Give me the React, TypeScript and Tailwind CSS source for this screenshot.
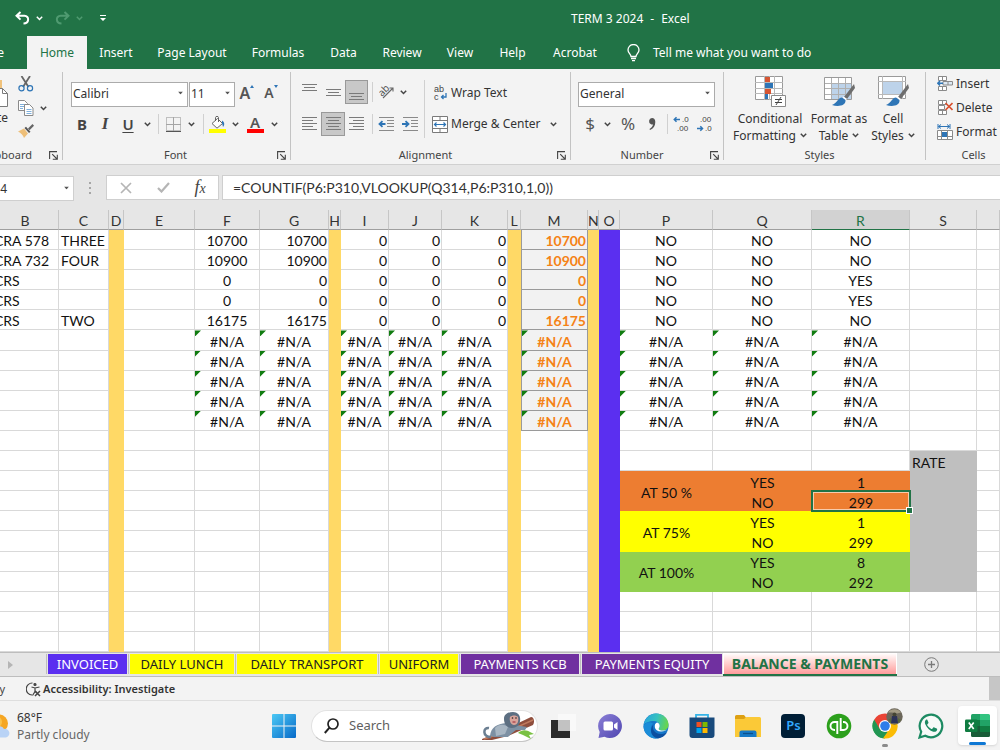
import type { ReactNode } from "react";
import clsx from "clsx";

const UI = "font-['Noto_Sans','Open_Sans',sans-serif]";
const CELL = "font-['Lato','Open_Sans',sans-serif]";

/* ---------- small shared pieces ---------- */

function Chevron({ className = "text-[#444]" }: { className?: string }) {
  return (
    <svg width="7" height="5" viewBox="0 0 7 5" className={clsx("shrink-0", className)} fill="none" stroke="currentColor" strokeWidth="1.5">
      <path d="M0.8 0.8 3.5 3.5 6.2 0.8" />
    </svg>
  );
}

function Caret() {
  return (
    <svg width="5" height="3" viewBox="0 0 5 3" className="pointer-events-none absolute top-1/2 right-[5px] -translate-y-1/2" fill="#555">
      <path d="M0 0h5L2.5 3z" />
    </svg>
  );
}

function Btn({ label, className, children }: { label: string; className?: string; children: ReactNode }) {
  return (
    <button type="button" aria-label={label} className={clsx("flex h-6 shrink-0 items-center justify-center", className)}>
      {children}
    </button>
  );
}

function Sep({ className }: { className?: string }) {
  return <span className={clsx("h-5 w-px shrink-0 bg-[#d0d0d0]", className)} />;
}

function Combo({ label, value, className }: { label: string; value: string; className: string }) {
  return (
    <span className={clsx("relative block h-[25px] shrink-0", className)}>
      <select aria-label={label} className="h-full w-full appearance-none border border-[#ababab] bg-white px-px text-[12px] text-[#333]">
        <option>{value}</option>
      </select>
      <Caret />
    </span>
  );
}

function Launcher() {
  return (
    <button type="button" aria-label="More settings" className="h-[9px] w-[9px]">
      <svg width="9" height="9" viewBox="0 0 9 9" fill="none" stroke="#444" strokeWidth="1.1">
        <path d="M0.6 8V0.6H8M3.2 3.2 8 8M8.3 3.8v4.5H3.8" />
      </svg>
    </button>
  );
}

function Group({ title, className, launcher = true, children }: { title: string; className: string; launcher?: boolean; children: ReactNode }) {
  return (
    <section className={clsx("relative flex shrink-0 flex-col border-r border-[#c3c3c3]", className)}>
      <div className="h-[75px] shrink-0">{children}</div>
      <h2 className="shrink-0 pr-[10px] text-center text-[11px] leading-4 text-[#444]">{title}</h2>
      {launcher && (
        <div className="absolute right-1 bottom-0 flex">
          <Launcher />
        </div>
      )}
    </section>
  );
}

/* ---------- ribbon icons ---------- */

function Lines({ rows }: { rows: [number, number, number][] }) {
  return (
    <svg width="15" height="17" viewBox="0 0 15 17" stroke="#7a7a7a" strokeWidth="1">
      {rows.map(([x, w, y]) => (
        <path key={y} d={`M${x} ${y}.5h${w}`} />
      ))}
    </svg>
  );
}

function Indent({ out }: { out: boolean }) {
  return (
    <svg width="17" height="16" viewBox="0 0 17 16" fill="none" stroke="#8a8a8a">
      <path d="M1 1.5h15M9 4.5h7M9 7.5h7M9 10.5h7M1 14.5h15" />
      {out ? (
        <path d="M7.500 8H2M4.500 5.200 1.500 8l3 2.800" stroke="#2e75b6" strokeWidth="1.8" />
      ) : (
        <path d="M0 8h6M3.500 5.200 6.500 8l-3 2.800" stroke="#2e75b6" strokeWidth="1.8" />
      )}
    </svg>
  );
}

function Brush() {
  return (
    <g>
      <path d="M31 8 21 21l3 2 8-11z" fill="#6d6d6d" />
      <path d="M20.500 20.500 24 23l-1.500 1.500-3-2.500z" fill="#fff" />
      <path d="M19 21.500c-4 0-4 5-10 7.500 6 2 14 1 13.500-5z" fill="#2e75b6" />
    </g>
  );
}

function ConditionalIcon() {
  return (
    <svg width="31" height="32" viewBox="0 0 31 32">
      <path d="M.5 .5h27v23H.5z" fill="#fff" stroke="#9a9a9a" />
      <path d="M9.500 0v24M14.500 0v24M19.500 0v24M0 6.500h28M0 12.500h28M0 17.500h28" stroke="#b8b8b8" />
      <path d="M10 1h5v5h-5zM10 13h6v5h-6z" fill="#d65532" />
      <path d="M10 7h8v5h-8zM10 18h3v5h-3z" fill="#2e75b6" />
      <path d="M16.500 19.500h14v11h-14z" fill="#fff" stroke="#8a8a8a" />
      <path d="M20 23.500h7M20 26.500h7M26 21l-5 8" stroke="#444" />
    </svg>
  );
}

function FormatTableIcon() {
  return (
    <svg width="33" height="32" viewBox="0 0 33 32">
      <path d="M1.500 1.500h27v22h-27z" fill="#fff" stroke="#9a9a9a" />
      <path d="M8 7h20v16H8z" fill="#bdd3ea" />
      <path d="M8.500 2v21M15.500 2v21M22.500 2v21M2 7.500h26M2 12.500h26M2 18.500h26" stroke="#b0b0b0" />
      <Brush />
    </svg>
  );
}

function CellStylesIcon() {
  return (
    <svg width="33" height="32" viewBox="0 0 33 32">
      <path d="M1.500 .5h27v22h-27z" fill="#fff" stroke="#9a9a9a" />
      <path d="M5.500 0v23M25.500 0v23M1 5.500h28M1 18.500h28" stroke="#b8b8b8" />
      <path d="M6 6h19v12H6z" fill="#bdd3ea" />
      <Brush />
    </svg>
  );
}

function BigButton({ icon, lines, className }: { icon: ReactNode; lines: [string, string]; className: string }) {
  return (
    <button type="button" className={clsx("flex shrink-0 flex-col items-center", className)}>
      {icon}
      <span className="mt-[2px] text-[12px] leading-[17px] whitespace-nowrap text-[#333]">
        {lines[0]}
        <br />
        <span className="inline-flex items-center gap-1">
          {lines[1]}
          <Chevron />
        </span>
      </span>
    </button>
  );
}

function CellsIcon({ kind }: { kind: "insert" | "delete" | "format" }) {
  return (
    <svg width="16" height="16" viewBox="0 0 16 16" fill="none" stroke="#8a8a8a" className="shrink-0">
      {kind === "format" ? (
        <>
          <path d="M1 0v5M13 0v5M1.500 2.500h11M4 .5l-2.500 2L4 4.500M10 .5l2.500 2-2.500 2" stroke="#2e75b6" />
          <path d="M.5 6.500h15v9H.5zM4.500 6v10M10.500 6v10M0 12.500h16" fill="#fff" />
          <path d="M5 8h5v5H5z" fill="#2e75b6" stroke="none" />
        </>
      ) : (
        <>
          <path d="M1.500 .5h8v4h-8zM5.500 .5v4M1.500 10.500h8v4h-8zM5.500 10.500v4" fill="#fff" />
          {kind === "insert" ? (
            <>
              <path d="M6 5.500h9.500v3.500H6zM11 5.500V9" fill="#dce8f4" />
              <path d="M6 7.200H1M3 5 .8 7.200 3 9.400" stroke="#2e75b6" strokeWidth="1.500" />
            </>
          ) : (
            <>
              <path d="M1.500 5.500h6v4h-6z" fill="#fff" />
              <path d="M8.500 3l7 7M15.500 3l-7 7" stroke="#d8502f" strokeWidth="1.700" />
            </>
          )}
        </>
      )}
    </svg>
  );
}

/* ---------- header ---------- */

const TABS: [string, string][] = [
  ["Home", "w-[60px]"],
  ["Insert", "w-[58px]"],
  ["Page Layout", "w-[94px]"],
  ["Formulas", "w-[78px]"],
  ["Data", "w-[53px]"],
  ["Review", "w-[64px]"],
  ["View", "w-[52px]"],
  ["Help", "w-[53px]"],
  ["Acrobat", "w-[72px]"],
];

function Header() {
  return (
    <header className="shrink-0 bg-[#217346] text-[12px] text-white">
      <div className="flex h-9 items-center pl-[15px]">
        <button type="button" aria-label="Undo">
          <svg width="15" height="14" viewBox="0 0 15 14" fill="none" stroke="#fff" strokeWidth="2">
            <path d="M5.500 1 1.500 4.800l4 3.800M2 4.800h7.500c5 0 5 7.500-1 7.700" />
          </svg>
        </button>
        <Chevron className="ml-[6px] text-white" />
        <button type="button" aria-label="Redo" className="ml-3">
          <svg width="15" height="14" viewBox="0 0 15 14" fill="none" stroke="#4f9a70" strokeWidth="2">
            <path d="M9.500 1l4 3.800-4 3.800M13 4.800H5.500c-5 0-5 7.500 1 7.700" />
          </svg>
        </button>
        <Chevron className="ml-[6px] text-[#4f9a70]" />
        <button type="button" aria-label="Customize toolbar" className="ml-[17px]">
          <svg width="6" height="6" viewBox="0 0 6 6" fill="#fff">
            <path d="M0 0h6v1H0zM0 3h6L3 6z" />
          </svg>
        </button>
        <h1 className="ml-[465px] flex gap-[7px] pt-px whitespace-nowrap">
          <span>TERM 3 2024</span>
          <span>-</span>
          <span>Excel</span>
        </h1>
      </div>
      <nav className="flex h-[33px] items-stretch whitespace-nowrap">
        <button type="button" className="flex w-[27px] items-center justify-end pr-[23px]">
          File
        </button>
        {TABS.map(([name, w]) => (
          <button key={name} type="button" className={clsx("shrink-0", w, name === "Home" && "bg-[#f3f3f3] text-[#217346]")}>
            {name}
          </button>
        ))}
        <button type="button" className="ml-4 flex items-center gap-[13px]">
          <svg width="13" height="18" viewBox="0 0 13 18" fill="none" stroke="#fff" strokeWidth="1.300">
            <path d="M4 12.500c0-2.500-3-3.500-3-6.500a5.500 5.500 0 0 1 11 0c0 3-3 4-3 6.500zM4 14.500h5M5 16.700h3" />
          </svg>
          Tell me what you want to do
        </button>
      </nav>
    </header>
  );
}

/* ---------- ribbon ---------- */

function Ribbon() {
  return (
    <div className="flex h-24 shrink-0 overflow-hidden border-b border-[#d0d0d0] bg-[#f3f3f3] pt-[3px] pb-1 text-[#333]">
      <Group title="Clipboard" className="-ml-[38px] w-[101px]">
        <div className="flex pt-1">
          <button type="button" className="ml-[10px] flex w-9 flex-col items-end text-[12px] leading-4">
            <svg width="30" height="34" viewBox="0 0 30 34">
              <path d="M1 4h23v22H1z" fill="#f0c27b" />
              <path d="M14.500 12.500h10l5 5v13h-15z" fill="#fff" stroke="#7a7a7a" />
              <path d="M24.500 12.500v5h5" fill="none" stroke="#7a7a7a" />
            </svg>
            Paste
          </button>
          <div className="ml-[10px] flex flex-col gap-2">
            <button type="button" aria-label="Cut">
              <svg width="16" height="16" viewBox="0 0 16 16" fill="none">
                <path d="M3.500 0 10.500 11M12 0 5 11" stroke="#666" strokeWidth="1.800" />
                <circle cx="3.500" cy="12.300" r="2.600" stroke="#2e75b6" strokeWidth="1.200" />
                <circle cx="12" cy="12.300" r="2.600" stroke="#2e75b6" strokeWidth="1.200" />
              </svg>
            </button>
            <span className="flex items-center gap-[6px]">
              <button type="button" aria-label="Copy">
                <svg width="16" height="16" viewBox="0 0 16 16" fill="#fff" stroke="#8a8a8a">
                  <path d="M.5 .5h6l3 3v7h-9z" />
                  <path d="M2 4.500h5M2 6.500h5M2 8.500h3" stroke="#7fb0dc" />
                  <path d="M6.500 4.500h5l3.500 3.500v7.500H6.500z" />
                  <path d="M8.500 9.500h5M8.500 11.500h5M8.500 13.500h5" stroke="#7fb0dc" />
                </svg>
              </button>
              <Chevron />
            </span>
            <button type="button" aria-label="Format painter">
              <svg width="16" height="14" viewBox="0 0 16 14">
                <path d="M0 7.500 6 4.500l4 5-4 4.500C5 11 3 9 0 7.500z" fill="#eebf79" />
                <path d="M6.500 4 8 2.800l4.500 5L11 9z" fill="#555" />
                <path d="M10 4.500 14.500 0 16 1.700l-4.500 4.500z" fill="#666" />
              </svg>
            </button>
          </div>
        </div>
      </Group>

      <Group title="Font" className="w-[228px] pl-2">
        <div className="flex items-center gap-px pt-2">
          <Combo label="Font name" value="Calibri" className="w-[117px]" />
          <Combo label="Font size" value="11" className="w-[46px]" />
          <Btn label="Grow font" className="w-[22px] items-start text-[16px] leading-6 font-semibold text-[#555]">
            A
            <svg width="4" height="3" viewBox="0 0 4 3" fill="#2e75b6" className="mt-1">
              <path d="M0 3h4L2 0z" />
            </svg>
          </Btn>
          <Btn label="Shrink font" className="w-6 items-start text-[14px] leading-6 font-semibold text-[#555]">
            A
            <svg width="4" height="3" viewBox="0 0 4 3" fill="#2e75b6" className="mt-1">
              <path d="M0 0h4L2 3z" />
            </svg>
          </Btn>
        </div>
        <div className="flex items-center pt-[7px] text-[15px] text-[#444]">
          <Btn label="Bold" className="w-[22px] font-bold">B</Btn>
          <Btn label="Italic" className="w-6 font-['Liberation_Serif',serif] text-[17px] font-bold italic">I</Btn>
          <Btn label="Underline" className="w-[22px] font-semibold underline underline-offset-2">U</Btn>
          <Btn label="Underline options" className="w-4"><Chevron /></Btn>
          <Sep className="mx-[3px]" />
          <Btn label="Borders" className="w-[22px]">
            <svg width="15" height="15" viewBox="0 0 15 15" fill="none" stroke="#8a8a8a">
              <path d="M.5 .5h14v13H.5z" strokeDasharray="1 1" />
              <path d="M7.500 0v14M0 7.500h15" stroke="#a5a5a5" />
              <path d="M0 14.500h15" stroke="#555" />
            </svg>
          </Btn>
          <Btn label="Border options" className="w-[14px]"><Chevron /></Btn>
          <Sep className="mr-[2px] ml-[5px]" />
          <Btn label="Fill color" className="w-[22px]">
            <svg width="17" height="17" viewBox="0 0 17 17" fill="none">
              <path d="M3 7.500 8.500 2.500l5 5-5.500 4.700z" fill="#fff" stroke="#666" />
              <path d="M6.500 5V1.500c0-1.500 3-1.500 3 0V6" stroke="#666" />
              <path d="M13 4.500c3 1.500 2.500 5 1 6.500l-1-4z" fill="#2e75b6" />
              <path d="M0 13h17v4H0z" fill="#ff0" />
            </svg>
          </Btn>
          <Btn label="Fill options" className="w-[14px]"><Chevron /></Btn>
          <Btn label="Font color" className="w-[26px] flex-col">
            <span className="text-[15px] leading-[13px] font-semibold text-[#555]">A</span>
            <span className="h-1 w-[17px] bg-[#f00]" />
          </Btn>
          <Btn label="Font color options" className="w-3"><Chevron /></Btn>
        </div>
      </Group>

      <Group title="Alignment" className="w-[280px]">
        <div className="flex">
          <div className="flex w-[133px] shrink-0 flex-col gap-2 pt-2 pl-[6px]">
            <div className="flex items-center">
              <Btn label="Top align" className="w-6"><Lines rows={[[0, 15, 0], [2, 11, 3], [0, 15, 6]]} /></Btn>
              <Btn label="Middle align" className="w-6"><Lines rows={[[0, 15, 5], [2, 11, 8], [0, 15, 11]]} /></Btn>
              <Btn label="Bottom align" className="w-[23px] border border-[#999] bg-[#c8c8c8]"><Lines rows={[[0, 15, 9], [2, 11, 12], [0, 15, 15]]} /></Btn>
              <Sep className="mr-[3px] ml-1" />
              <Btn label="Orientation" className="w-[22px]">
                <svg width="16" height="16" viewBox="0 0 16 16" fill="none" stroke="#666" strokeWidth="1.100">
                  <path d="M4 14 14 4M10.500 4H14v3.500" />
                  <text x="0" y="10" transform="rotate(-45 5 8)" fontSize="10" fill="#555" stroke="none" fontFamily="Noto Sans">ab</text>
                </svg>
              </Btn>
              <Btn label="Orientation options" className="w-[10px]"><Chevron /></Btn>
            </div>
            <div className="flex items-center">
              <Btn label="Align left" className="w-6"><Lines rows={[[0, 15, 1], [0, 11, 4], [0, 15, 7], [0, 11, 10], [0, 15, 13]]} /></Btn>
              <Btn label="Center" className="w-6 border border-[#999] bg-[#c8c8c8]"><Lines rows={[[0, 15, 1], [2, 11, 4], [0, 15, 7], [2, 11, 10], [0, 15, 13]]} /></Btn>
              <Btn label="Align right" className="w-[23px]"><Lines rows={[[0, 15, 1], [4, 11, 4], [0, 15, 7], [4, 11, 10], [0, 15, 13]]} /></Btn>
              <Sep className="mr-px ml-1" />
              <Btn label="Decrease indent" className="w-6"><Indent out /></Btn>
              <Btn label="Increase indent" className="w-6"><Indent out={false} /></Btn>
            </div>
          </div>
          <span className="mt-2 h-[58px] w-px bg-[#d0d0d0]" />
          <div className="flex flex-col gap-[7px] pt-[9px] pl-[7px] text-[12px]">
            <button type="button" className="flex h-6 items-center gap-[3px]">
              <svg width="16" height="18" viewBox="0 0 16 18" fill="#444" fontFamily="Liberation Sans" fontSize="9">
                <text x="2" y="8">ab</text>
                <text x="2" y="16">c</text>
                <path d="M14 9v4H9.500M11.500 11l-2 2 2 2" fill="none" stroke="#2e75b6" strokeWidth="1.300" />
              </svg>
              Wrap Text
            </button>
            <button type="button" className="flex h-6 items-center gap-[3px] whitespace-nowrap">
              <svg width="16" height="17" viewBox="0 0 16 17" fill="#fff" stroke="#7a7a7a">
                <path d="M.5 .5h15v16H.5zM.5 4.500h15M.5 12.500h15M8 .5v4M8 12.500v4" />
                <path d="M2 8.500h12M4.500 6.500 2.500 8.500l2 2M11.500 6.500l2 2-2 2" fill="none" stroke="#2e75b6" strokeWidth="1.200" />
              </svg>
              Merge &amp; Center
              <span className="ml-[6px] flex"><Chevron /></span>
            </button>
          </div>
        </div>
      </Group>

      <Group title="Number" className="w-[153px]">
        <div className="flex pt-2 pl-[7px]">
          <Combo label="Number format" value="General" className="w-[137px]" />
        </div>
        <div className="flex items-center pt-[7px] pl-[7px] text-[#555]">
          <Btn label="Currency" className="w-6 text-[17px]">$</Btn>
          <Btn label="Currency options" className="w-[11px]"><Chevron /></Btn>
          <Btn label="Percent" className="w-[30px] text-[17px]">%</Btn>
          <Btn label="Comma style" className="w-[18px]">
            <svg width="8" height="12" viewBox="0 0 8 12" fill="#555">
              <path d="M4 0a3.300 3.300 0 0 0-1 6.300c1 .3 1.700.2 2 0C4.800 8.500 3.500 10 1.500 11l.5 1c3.500-1.300 5.300-4 5.300-8C7.300 1.500 6 0 4 0z" />
            </svg>
          </Btn>
          <Sep className="mr-[2px] ml-[6px]" />
          <Btn label="Increase decimal" className="w-[22px]">
            <svg width="17" height="18" viewBox="0 0 17 18" fill="#444" fontFamily="Liberation Sans" fontSize="8">
              <path d="M7 4.500H1.500M3.500 2.300 1.300 4.500l2.200 2.200" fill="none" stroke="#2e75b6" strokeWidth="1.500" />
              <text x="9" y="7">.0</text>
              <text x="4" y="16">.00</text>
            </svg>
          </Btn>
          <Btn label="Decrease decimal" className="w-6">
            <svg width="17" height="18" viewBox="0 0 17 18" fill="#444" fontFamily="Liberation Sans" fontSize="8">
              <text x="4" y="7">.00</text>
              <text x="9" y="16">.0</text>
              <path d="M1 13.500h5.500M4.300 11.300l2.200 2.200-2.200 2.200" fill="none" stroke="#2e75b6" strokeWidth="1.500" />
            </svg>
          </Btn>
        </div>
      </Group>

      <Group title="Styles" className="w-[202px]" launcher={false}>
        <div className="flex pt-1 pl-[7px]">
          <BigButton icon={<ConditionalIcon />} lines={["Conditional", "Formatting"]} className="w-[78px]" />
          <BigButton icon={<FormatTableIcon />} lines={["Format as", "Table"]} className="w-[60px]" />
          <BigButton icon={<CellStylesIcon />} lines={["Cell", "Styles"]} className="w-12" />
        </div>
      </Group>

      <Group title="Cells" className="w-[106px]" launcher={false}>
        <div className="flex flex-col gap-2 pt-1 pl-[11px] text-[12px]">
          <button type="button" className="flex h-4 items-center gap-[3px]">
            <CellsIcon kind="insert" />
            Insert
            <span className="ml-2 flex"><Chevron /></span>
          </button>
          <button type="button" className="flex h-4 items-center gap-[3px]">
            <CellsIcon kind="delete" />
            Delete
          </button>
          <button type="button" className="flex h-4 items-center gap-[3px]">
            <CellsIcon kind="format" />
            Format
          </button>
        </div>
      </Group>
    </div>
  );
}

/* ---------- formula bar ---------- */

function FormulaBar() {
  return (
    <div className="flex h-[45px] shrink-0 bg-[#e6e6e6] pt-[10px] pb-[10px]">
      <span className="relative -ml-[23px] w-[97px] shrink-0">
        <input aria-label="Name box" defaultValue="R314" className="h-full w-full border border-[#cfcfcf] bg-white pl-px text-[12px] text-[#333]" />
        <Caret />
      </span>
      <span className="flex w-8 shrink-0 items-center justify-center">
        <svg width="3" height="12" viewBox="0 0 3 12" fill="#a6a6a6">
          <path d="M0 0h2v2H0zM0 5h2v2H0zM0 10h2v2H0z" />
        </svg>
      </span>
      <div className="flex w-[113px] shrink-0 items-center border border-[#cfcfcf] bg-white">
        <Btn label="Cancel" className="w-[37px]">
          <svg width="12" height="12" viewBox="0 0 12 12" stroke="#b5b5b5" strokeWidth="1.700">
            <path d="M1 1l10 10M11 1 1 11" />
          </svg>
        </Btn>
        <Btn label="Enter" className="w-[38px]">
          <svg width="13" height="11" viewBox="0 0 13 11" fill="none" stroke="#b5b5b5" strokeWidth="2.200">
            <path d="M1 6l3.500 3.500L12 1" />
          </svg>
        </Btn>
        <Btn label="Insert function" className="flex-1 font-['Liberation_Serif',serif] text-[18px] text-[#444] italic">
          <span>f<span className="text-[14px]">x</span></span>
        </Btn>
      </div>
      <input
        aria-label="Formula"
        defaultValue="=COUNTIF(P6:P310,VLOOKUP(Q314,P6:P310,1,0))"
        className={clsx(CELL, "ml-[3px] min-w-0 flex-1 border border-r-0 border-[#cfcfcf] bg-white pl-[10px] text-[14px] text-[#333]")}
      />
    </div>
  );
}

/* ---------- sheet ---------- */

const COLS: [string, string][] = [
  ["B", "w-[67px]"],
  ["C", "w-[50px]"],
  ["D", "w-[15px]"],
  ["E", "w-[71px]"],
  ["F", "w-[65px]"],
  ["G", "w-[69px]"],
  ["H", "w-[12px]"],
  ["I", "w-[48px]"],
  ["J", "w-[53px]"],
  ["K", "w-[66px]"],
  ["L", "w-[13px]"],
  ["M", "w-[67px]"],
  ["N", "w-[11px]"],
  ["O", "w-[21px]"],
  ["P", "w-[93px]"],
  ["Q", "w-[99px]"],
  ["R", "w-[98px]"],
  ["S", "w-[67px]"],
  ["", ""],
];

type Row = Record<string, string>;

const balance = (B: string, C: string, amount: string, R: string): Row => ({
  B, C, F: amount, G: amount, I: "0", J: "0", K: "0", M: amount, P: "NO", Q: "NO", R,
});

const missing: Row = Object.fromEntries([..."FGIJKMPQR"].map((c) => [c, "#N/A"]));

const ROWS: Row[] = [
  balance("CRA 578", "THREE", "10700", "NO"),
  balance("CRA 732", "FOUR", "10900", "NO"),
  balance("CRS", "", "0", "YES"),
  balance("CRS", "", "0", "YES"),
  balance("CRS", "TWO", "16175", "NO"),
  missing,
  missing,
  missing,
  missing,
  missing,
  {},
  { S: "RATE" },
  { P: "AT 50 %", Q: "YES", R: "1" },
  { Q: "NO", R: "299" },
  { P: "AT 75%", Q: "YES", R: "1" },
  { Q: "NO", R: "299" },
  { P: "AT 100%", Q: "YES", R: "8" },
  { Q: "NO", R: "292" },
  {},
  {},
  {},
];

const BAND = ["bg-[#ed7d31]", "bg-[#ffff00]", "bg-[#92d050]"];

function Cell({ col, row, text }: { col: string; row: number; text: string }) {
  const inSummary = row >= 12 && row <= 17;
  const band = inSummary && col !== "" && "PQR".includes(col);
  if (band && col === "P" && row % 2 === 1) return null;
  const error = text === "#N/A";
  const selected = col === "R" && row === 13;
  const gold = col !== "" && "DHLN".includes(col);
  const purple = col === "O";
  const rate = col === "S" && row >= 11 && row <= 17;
  const accent = col === "M" && row < 10;
  const plain = !gold && !purple && !rate && !band && !accent;
  const right = !error && col !== "" && "GIJKM".includes(col);
  return (
    <td
      rowSpan={band && col === "P" ? 2 : 1}
      className={clsx(
        "relative h-5 pt-[2px] pb-0 leading-[17px] whitespace-nowrap",
        right ? "pr-px pl-0 text-right" : col !== "" && "BCS".includes(col) ? "pr-0 pl-[2px] text-left" : "px-0 text-center",
        gold && "bg-[#ffd966]",
        purple && "bg-[#5b2ff0]",
        rate && "bg-[#bfbfbf]",
        band && BAND[Math.floor((row - 12) / 2)],
        accent && "border-r border-b border-l border-[#9a9a9a] bg-[#f2f2f2] font-bold text-[#f58216]",
        plain && "border-r border-b border-[#d9d9d9]",
        selected && "z-10",
      )}
    >
      {error && <span className="absolute top-0 left-0 h-[6px] w-[6px] bg-[#107c10] [clip-path:polygon(0_0,100%_0,0_100%)]" />}
      {text}
      {selected && (
        <span className="absolute -inset-px border-2 border-[#217346]">
          <span className="block h-full w-full border border-white/60" />
          <span className="absolute -right-[3px] -bottom-[3px] h-[5px] w-[5px] bg-[#217346] outline-1 outline-white" />
        </span>
      )}
    </td>
  );
}

function Sheet() {
  return (
    <main className="min-h-0 flex-1 overflow-hidden bg-white">
      <div className="-ml-2 h-full">
        <table className={clsx(CELL, "h-full w-full table-fixed border-separate border-spacing-0 text-[14px] text-[#111]")}>
          <colgroup>
            {COLS.map(([c, w]) => (
              <col key={c} className={w} />
            ))}
          </colgroup>
          <thead>
            <tr>
              {COLS.map(([c]) => (
                <th
                  key={c}
                  scope="col"
                  className={clsx(
                    "h-5 border-r border-b border-r-[#c6c6c6] px-0 pt-[2px] pb-0 text-center leading-[17px] font-normal",
                    c === "R" ? "border-b-[#217346] bg-[#d2d2d2] text-[#217346]" : "border-b-[#9f9f9f] bg-[#e6e6e6] text-[#333]",
                  )}
                >
                  {c}
                </th>
              ))}
            </tr>
          </thead>
          <tbody>
            {ROWS.map((r, i) => (
              <tr key={i}>
                {COLS.map(([c]) => (
                  <Cell key={c} col={c} row={i} text={r[c] ?? ""} />
                ))}
              </tr>
            ))}
          </tbody>
        </table>
      </div>
    </main>
  );
}

/* ---------- sheet tabs & status ---------- */

const SHEETS: [string, string][] = [
  ["INVOICED", "w-[79px] bg-[#5b2ff0] text-white"],
  ["DAILY LUNCH", "w-[104px] bg-[#ffff00] text-[#222]"],
  ["DAILY TRANSPORT", "w-[140px] bg-[#ffff00] text-[#222]"],
  ["UNIFORM", "w-[78px] bg-[#ffff00] text-[#222]"],
  ["PAYMENTS KCB", "w-[118px] bg-[#7030a0] text-white"],
  ["PAYMENTS EQUITY", "w-[140px] bg-[#7030a0] text-white"],
];

function SheetTabs() {
  return (
    <nav className="flex h-[25px] shrink-0 items-stretch border-t border-b border-[#bdbdbd] bg-[#e6e6e6] text-[13px] whitespace-nowrap">
      <button type="button" aria-label="Next sheets" className="flex w-[46px] shrink-0 items-center pl-2">
        <svg width="5" height="8" viewBox="0 0 5 8" fill="#b5b5b5">
          <path d="M0 0l5 4-5 4z" />
        </svg>
      </button>
      <div className="flex gap-px pt-px pb-[2px]">
        {SHEETS.map(([name, c]) => (
          <span key={name} className="flex border-l border-[#bdbdbd] pl-px">
            <button type="button" className={clsx("shrink-0 leading-5", c)}>
              {name}
            </button>
          </span>
        ))}
      </div>
      <div className="ml-px flex border-b-2 border-[#217346] bg-white px-px">
        <button type="button" className="w-[172px] bg-linear-to-b from-white to-[#ff9c9c] text-[14px] leading-5 font-bold text-[#217346]">
          BALANCE &amp; PAYMENTS
        </button>
      </div>
      <button type="button" aria-label="New sheet" className="ml-[27px] flex items-center">
        <svg width="15" height="15" viewBox="0 0 15 15" fill="none" stroke="#7a7a7a">
          <circle cx="7.500" cy="7.500" r="6.800" />
          <path d="M7.500 4v7M4 7.500h7" strokeWidth="1.300" />
        </svg>
      </button>
    </nav>
  );
}

function StatusBar() {
  return (
    <div className="flex h-[23px] shrink-0 items-center bg-[#f3f3f3] text-[11px] whitespace-nowrap text-[#444]">
      <span className="flex w-[5px] shrink-0 justify-end pt-px">Ready</span>
      <button type="button" className="ml-[21px] flex items-center gap-[2px] pt-px font-semibold text-[#333]">
        <svg width="15" height="15" viewBox="0 0 15 15" fill="none" stroke="#444" strokeWidth="1.200">
          <path d="M6.500 1A6 6 0 1 0 6 13" />
          <circle cx="9" cy="2.500" r="1" fill="#444" />
          <path d="M5.500 5l3.500 1 4.500-1M9 6v3.500l-2.500 4M9 9l2 2" />
          <path d="M9 9l5 5M14 9l-5 5" strokeWidth="1.500" />
        </svg>
        Accessibility: Investigate
      </button>
      <span className="ml-auto h-full w-[11px] bg-[#c6c6c6]" />
    </div>
  );
}

/* ---------- taskbar ---------- */

function Monkey() {
  return (
    <svg width="53" height="30" viewBox="0 0 53 30" className="shrink-0">
      <path d="M0 28 20 20 49 6c3 0 4 5 2 8L26 25 10 29H0z" fill="#8f4e3d" />
      <path d="M2 28 24 21 51 9" stroke="#c07a5e" strokeWidth="1.500" fill="none" />
      <path d="M36 22c4-4 9-3 12-1l4 2-5 1 2 4-8-4z" fill="#7ac143" />
      <path d="M9 26C0 26 1 16 7 17" fill="none" stroke="#6b7f92" strokeWidth="2.500" />
      <path d="M8 25c1-9 7-12 16-13l9 2 12 2-2 3-9 0-5 4-3 3H12z" fill="#7d90a3" />
      <path d="M13 17c4-4 9-4 13-1l-3 7-9 2z" fill="#a8b6c3" />
      <path d="M22 8c0-5 4-7 9-7s8 4 7 9c0 4-4 7-8 7-5 0-8-4-8-9z" fill="#5d6f82" />
      <path d="M28 6c2-2 6-2 8 0 1 5-1 8-4 8s-5-4-4-8z" fill="#d9a39a" />
      <circle cx="30.500" cy="7" r=".8" fill="#222" />
      <circle cx="34" cy="7" r=".8" fill="#222" />
      <path d="M30.500 11h3" stroke="#923" />
    </svg>
  );
}

const APPS: { name: string; art: ReactNode }[] = [
  {
    name: "Task view",
    art: (
      <svg width="26" height="26" viewBox="0 0 26 26">
        <path d="M0 7h19v18H0z" fill="#2b2b2b" />
        <path d="M7 1h18v17H7z" fill="#f9f9f9" />
        <path d="M7 7h12v11H7z" fill="#c2c2c2" />
      </svg>
    ),
  },
  {
    name: "Chat",
    art: (
      <svg width="26" height="26" viewBox="0 0 26 26">
        <defs>
          <linearGradient id="chat" x1="0" y1="0" x2="1" y2="1">
            <stop offset="0" stopColor="#8b7fd6" />
            <stop offset="1" stopColor="#4f46b0" />
          </linearGradient>
        </defs>
        <path d="M13 1a12 12 0 1 1-5.500 22.700L1.500 25l1.200-6A12 12 0 0 1 13 1z" fill="url(#chat)" />
        <rect x="6.500" y="8.500" width="9.500" height="9" rx="1.500" fill="#fff" />
        <path d="M17 11.500l3.500-2.500v8L17 14.500z" fill="#fff" />
      </svg>
    ),
  },
  {
    name: "Edge",
    art: (
      <svg width="26" height="26" viewBox="0 0 26 26">
        <defs>
          <linearGradient id="edgeTop" x1="0" y1="0.3" x2="1" y2="0.5">
            <stop offset="0" stopColor="#2aa5dd" />
            <stop offset="0.5" stopColor="#35c1c0" />
            <stop offset="1" stopColor="#6ad64a" />
          </linearGradient>
        </defs>
        <circle cx="13" cy="13" r="12.500" fill="#1677c9" />
        <path d="M.8 11.500C2 4.500 7.300.5 13 .5 20.500.5 25.500 6 25.500 11.500c0 4-3 6-6 6-3.500 0-4.300-1.300-3.500-2.500 1.800-2.500 0-7-5-7C6 8 2 10 .8 11.500z" fill="url(#edgeTop)" />
        <path d="M10 10.500c-4.500 4.500-2 13.500 5.500 14.500C8 27 .5 21 .5 13c2-4 6-5 9.500-2.500z" fill="#1b8cd8" />
        <path d="M10.500 11.500c-2 4 1 9.500 7 9.500 3 0 5-.8 6.500-1.800-2 3.800-5.500 6-9.500 6C7 24 6.500 15 10.500 11.500z" fill="#0c4fa0" />
        <path d="M16 15c1.500-2 .5-5-2-5.500-3.500 1-3.500 9 4 9 3 0 5.500-1 7.200-3.300C24.500 17 22 17.500 19.500 17.500c-3.500 0-4.300-1.300-3.500-2.500z" fill="#fff" />
      </svg>
    ),
  },
  {
    name: "Store",
    art: (
      <svg width="26" height="26" viewBox="0 0 26 26">
        <path d="M7 5V1.800h12V5" fill="none" stroke="#35b4e8" strokeWidth="1.800" />
        <path d="M.5 4.500h25V22a3 3 0 0 1-3 3h-19a3 3 0 0 1-3-3z" fill="#184a7c" />
        <path d="M7.500 9h5v5h-5z" fill="#f25022" />
        <path d="M13.500 9h5v5h-5z" fill="#7fba00" />
        <path d="M7.500 15h5v5h-5z" fill="#00a4ef" />
        <path d="M13.500 15h5v5h-5z" fill="#ffb900" />
      </svg>
    ),
  },
  {
    name: "File Explorer",
    art: (
      <svg width="26" height="26" viewBox="0 0 26 26">
        <path d="M0 3.500A1.500 1.500 0 0 1 1.500 2H9l2 2.500-2 3H0z" fill="#dda013" />
        <path d="M0 6h9l2.500-2h13A1.500 1.500 0 0 1 26 5.500V24H0z" fill="#fbc937" />
        <path d="M4.500 24v-4.500a2 2 0 0 1 2-2h13a2 2 0 0 1 2 2V24z" fill="#1679c6" />
        <path d="M8 20.500h10" stroke="#0b4f8c" strokeWidth="1.300" />
      </svg>
    ),
  },
  {
    name: "Photoshop",
    art: (
      <span className="flex h-6 w-6 items-center justify-center rounded-[4px] bg-[#001e36] text-[13px] font-semibold text-[#31a8ff]">Ps</span>
    ),
  },
  {
    name: "QuickBooks",
    art: (
      <svg width="26" height="26" viewBox="0 0 26 26">
        <circle cx="13" cy="13" r="12.300" fill="#2ca01c" />
        <path d="M11.500 9H8.500a4 4 0 0 0 0 8H9M11.300 8v13M14.500 17h3a4 4 0 0 0 0-8H17M14.700 18V5" fill="none" stroke="#fff" strokeWidth="1.900" />
      </svg>
    ),
  },
  {
    name: "Chrome",
    art: (
      <span className="relative">
        <svg width="26" height="26" viewBox="0 0 26 26">
          <path d="M13 13 2.170 6.750A12.500 12.500 0 0 1 23.830 6.750z" fill="#ea4335" />
          <path d="M13 13V25.500A12.500 12.500 0 0 1 2.170 6.750z" fill="#34a853" />
          <path d="M13 13 23.830 6.750A12.500 12.500 0 0 1 11 25.400z" fill="#fbbc05" />
          <path d="M2.170 6.750 8 16.500l5-9.500h11z" fill="#ea4335" />
          <path d="M2.170 6.750 7.500 16l8 3-4.500 6.300A12.500 12.500 0 0 1 2.170 6.750z" fill="#219653" />
          <circle cx="13" cy="13" r="6" fill="#fff" />
          <circle cx="13" cy="13" r="4.800" fill="#2f7de9" />
        </svg>
        <svg width="17" height="17" viewBox="0 0 17 17" className="absolute -top-[5px] left-[14px]">
          <circle cx="8.500" cy="8.500" r="8.200" fill="#6b665a" />
          <path d="M2 4.500a8 8 0 0 1 13 0l-4 1-5-1z" fill="#a39b84" />
          <path d="M6 8h5l1 7H5z" fill="#2c3358" />
          <circle cx="8.500" cy="6.500" r="2" fill="#443" />
          <path d="M2 12l3-2v5zM15 12l-3-2v5z" fill="#586b3d" />
        </svg>
        <span className="absolute -bottom-2 left-[10px] h-[3px] w-[6px] rounded-full bg-[#8a8a8a]" />
      </span>
    ),
  },
  {
    name: "WhatsApp",
    art: (
      <svg width="26" height="26" viewBox="0 0 26 26" fill="none">
        <path d="M1.500 24.500 3.200 18.700A11.300 11.300 0 1 1 7.300 22.800z" fill="#f7faf8" stroke="#1c8a62" strokeWidth="2.200" />
        <path d="M9.300 6.800c-.5-.4-1-.3-1.500.2-1 1-1.200 2.500-.5 4.200 1.500 3.700 4.500 6.500 8 7.500 1.700.4 3.300-.4 3.800-1.800.2-.7.1-1-.4-1.300l-2.400-1.200c-.4-.2-.8-.1-1 .2l-1 1.200c-.3.300-.6.300-1 .1a9 9 0 0 1-4-3.700c-.2-.4-.1-.7.1-.9l.9-1.100c.2-.3.200-.6.100-.9z" fill="#1c8a62" />
      </svg>
    ),
  },
  {
    name: "Excel",
    art: (
      <span className="relative flex h-[39px] w-[39px] items-center justify-center rounded-[4px] bg-white shadow-sm">
        <svg width="25" height="24" viewBox="0 0 25 24">
          <path d="M6 1.500A1.500 1.500 0 0 1 7.500 0H15v6H6z" fill="#21a366" />
          <path d="M15 0h8.500A1.500 1.500 0 0 1 25 1.500V6H15z" fill="#33c481" />
          <path d="M6 6h9v6H6z" fill="#107c41" />
          <path d="M15 6h10v6H15z" fill="#21a366" />
          <path d="M6 12h9v6H6z" fill="#185c37" />
          <path d="M15 12h10v6H15z" fill="#107c41" />
          <path d="M6 18h19v3.500a1.500 1.500 0 0 1-1.500 1.500h-16A1.500 1.500 0 0 1 6 21.500z" fill="#185c37" />
          <rect y="5.500" width="12.500" height="12.500" rx="1.200" fill="#107c41" />
          <path d="M3.800 8.500l4.900 6.500M8.700 8.500 3.800 15" stroke="#fff" strokeWidth="1.700" />
        </svg>
        <span className="absolute bottom-0 left-[11px] h-[3px] w-[17px] rounded-full bg-[#0f78d4]" />
      </span>
    ),
  },
];

function Taskbar() {
  return (
    <footer className="flex h-[50px] shrink-0 items-center border-t border-[#dedede] bg-[#f3f3f3]">
      <button type="button" className="flex w-[262px] shrink-0 items-center text-left whitespace-nowrap">
        <svg width="26" height="24" viewBox="0 0 26 24" className="-ml-4 shrink-0">
          <circle cx="15" cy="9.500" r="9" fill="#f5a623" />
          <circle cx="12" cy="8" r="6" fill="#fbc24a" />
          <path d="M10 23.500a4.500 4.500 0 0 1 1-8.500 5 5 0 0 1 9 0 4.300 4.300 0 0 1 2 8.500z" fill="#b9d3f6" />
        </svg>
        <span className="ml-[7px] text-[12px] leading-[17px] text-[#333]">
          68°F
          <br />
          <span className="text-[#666]">Partly cloudy</span>
        </span>
      </button>
      <button type="button" aria-label="Start" className="flex w-[44px] shrink-0 justify-center">
        <svg width="24" height="24" viewBox="0 0 24 24">
          <defs>
            <linearGradient id="win" x1="0" y1="0" x2="24" y2="24" gradientUnits="userSpaceOnUse">
              <stop offset="0" stopColor="#4cc9f5" />
              <stop offset="1" stopColor="#0669c8" />
            </linearGradient>
          </defs>
          <path d="M0 1a1 1 0 0 1 1-1h10.500v11.500H0zM12.500 0H23a1 1 0 0 1 1 1v10.500H12.500zM0 12.500h11.500V24H1a1 1 0 0 1-1-1zM12.500 12.500H24V23a1 1 0 0 1-1 1H12.500z" fill="url(#win)" />
        </svg>
      </button>
      <label className="ml-[5px] flex h-8 w-[227px] shrink-0 items-center rounded-full border border-[#e2e2e2] border-b-[#c4c4c4] bg-white pr-[2px] pl-3">
        <svg width="15" height="16" viewBox="0 0 15 16" fill="none" stroke="#222" strokeWidth="1.700" className="shrink-0">
          <circle cx="9" cy="6" r="5" />
          <path d="M5.500 9.700.8 15" strokeWidth="2" />
        </svg>
        <input aria-label="Search" placeholder="Search" className="ml-[10px] min-w-0 flex-1 bg-transparent text-[13px] placeholder:text-[#5f5f5f]" />
        <Monkey />
      </label>
      <div className="ml-[3px] grid flex-1 grid-cols-10">
        {APPS.map(({ name, art }) => (
          <button key={name} type="button" aria-label={name} className="flex h-10 items-center justify-center">
            {art}
          </button>
        ))}
      </div>
    </footer>
  );
}

export default function App() {
  return (
    <div className={clsx(UI, "flex h-screen flex-col overflow-hidden bg-[#e6e6e6]")}>
      <Header />
      <Ribbon />
      <FormulaBar />
      <Sheet />
      <SheetTabs />
      <StatusBar />
      <Taskbar />
    </div>
  );
}
